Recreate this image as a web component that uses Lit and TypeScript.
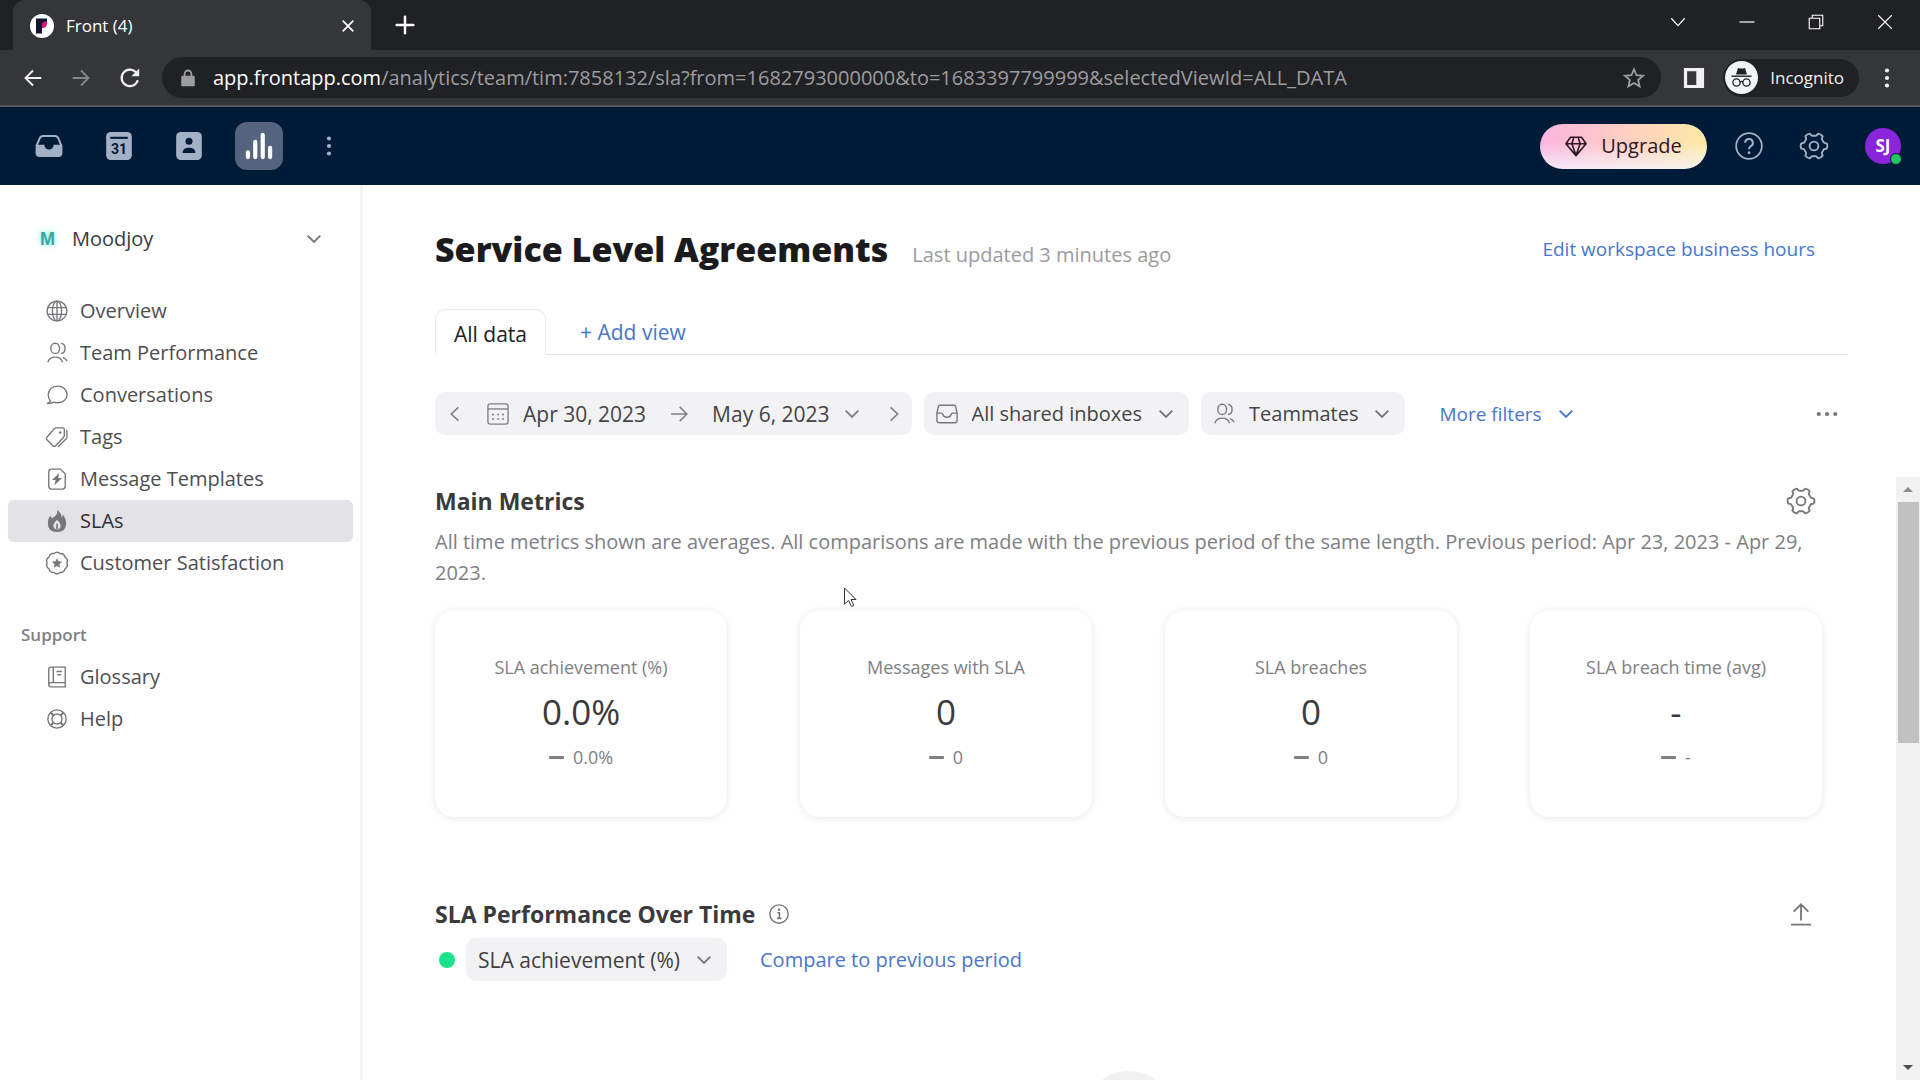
import { LitElement, html, css, svg } from "lit";
import { customElement, property } from "lit/decorators.js";

const polar = (angle: number, radius: number) =>
  `${(12 + radius * Math.cos(angle)).toFixed(2)} ${(12 + radius * Math.sin(angle)).toFixed(2)}`;

// Six rounded teeth laid out around the hub.
const gearPath = (() => {
  let d = "";
  for (let i = 0; i < 6; i++) {
    const a = (i * Math.PI) / 3;
    d += `${i === 0 ? "M" : "L"}${polar(a - 0.2, 11.2)}`;
    d += `Q${polar(a, 12)} ${polar(a + 0.2, 11.2)}`;
    d += `L${polar(a + 0.27, 9.6)}`;
    d += `Q${polar(a + 0.33, 8.5)} ${polar(a + 0.52, 8.8)}`;
    d += `Q${polar(a + 0.72, 8.5)} ${polar(a + 0.78, 9.6)}`;
  }
  return d + "Z";
})();

const scallopPath = (() => {
  const n = 10;
  let d = `M${polar(0, 10.8)}`;
  for (let i = 1; i <= n; i++) {
    const a = (i * 2 * Math.PI) / n;
    d += `Q${polar(a - Math.PI / n, 13.2)} ${polar(a, 10.8)}`;
  }
  return d + "Z";
})();

const glyphs: Record<string, unknown> = {
  back: svg`<path d="M22 12H3M12 3l-9 9 9 9" stroke-width="2.200"/>`,
  forward: svg`<path d="M2 12h19M12 3l9 9-9 9" stroke-width="2.200"/>`,
  reload: svg`<path d="M20.500 14.500A9 9 0 1 1 18.500 5.800" stroke-width="2.400"/><path d="M22 1.500v8.500h-8.500z" fill="currentColor" stroke="none"/>`,
  lock: svg`<path d="M4 10h16v12H4z" fill="currentColor" stroke-width="2" stroke-linejoin="round"/><path d="M7.500 10V6.500a4.500 4.500 0 0 1 9 0V10" stroke-width="2.400"/>`,
  star: svg`<path d="M12 2.500l2.800 6.500 7 .6-5.300 4.600 1.600 6.900-6.100-3.700-6.100 3.700 1.600-6.900L2.200 9.600l7-.6z" stroke-width="2"/>`,
  panel: svg`<path fill="currentColor" stroke="none" fill-rule="evenodd" d="M1 1h22v22H1zM4.500 4.500v15h10v-15z"/>`,
  close: svg`<path d="M4 4l16 16M20 4L4 20" stroke-width="2.600"/>`,
  plus: svg`<path d="M12 2v20M2 12h20" stroke-width="3" stroke-linecap="round"/>`,
  winClose: svg`<path d="M3 3l18 18M21 3L3 21" stroke-width="1.500"/>`,
  winMin: svg`<path d="M2 12h20" stroke-width="1.600"/>`,
  winMax: svg`<path d="M3 7h14v14H3zM7 7V3h14v14h-4" stroke-width="1.500"/>`,
  chevThin: svg`<path d="M3 7l9 10 9-10" stroke-width="1.500"/>`,
  chevron: svg`<path d="M2.500 7l9.500 9.500L21.500 7" stroke-width="2.800"/>`,
  left: svg`<path d="M17 2L6.500 12 17 22" stroke-width="2.400"/>`,
  right: svg`<path d="M7 2l10.500 10L7 22" stroke-width="2.400"/>`,
  arrow: svg`<path d="M1.500 12h21M13 2.500l9.500 9.500-9.500 9.500" stroke-width="2"/>`,
  vdots: svg`<g fill="currentColor" stroke="none"><circle cx="12" cy="3" r="2.500"/><circle cx="12" cy="12" r="2.500"/><circle cx="12" cy="21" r="2.500"/></g>`,
  hdots: svg`<g fill="currentColor" stroke="none"><circle cx="3" cy="12" r="2.300"/><circle cx="12" cy="12" r="2.300"/><circle cx="21" cy="12" r="2.300"/></g>`,
  inboxFill: svg`<path d="M1.500 11.500L4 5.500Q4.800 3.500 7 3.500h10q2.200 0 3 2l2.500 6" stroke-width="1.700"/><path fill="currentColor" stroke="none" d="M.5 11H8a4 4 0 0 0 8 0h7.500v7q0 3.500-3.500 3.500H4Q.5 21.500.5 18z"/>`,
  calFill: svg`<rect x="1" y="0" width="22" height="24" rx="4" fill="currentColor" stroke="none"/><path d="M4.500 5h15" stroke="#001b38" stroke-width="1.800"/><text x="12" y="19" text-anchor="middle" font-size="12" font-weight="700" fill="#001b38" stroke="none">31</text>`,
  contactFill: svg`<rect x="1" y="0" width="22" height="24" rx="4" fill="currentColor" stroke="none"/><circle cx="12" cy="8" r="3" fill="#001b38" stroke="none"/><path d="M6.500 18q0-4.500 5.500-4.500t5.500 4.500z" fill="#001b38" stroke="none"/>`,
  bars: svg`<path d="M2.500 17.500v4M8.800 8.500v13M15.200 2.500v19M21.500 13.500v8" stroke-width="3.600" stroke-linecap="round"/>`,
  gem: svg`<path d="M6 2.500h12l5 7L12 22.500 1 9.500zM1 9.500h22M9.500 3L7.500 9.500 12 22l4.500-12.500L14.500 3" stroke-width="1.700" stroke-linejoin="round"/>`,
  question: svg`<circle cx="12" cy="12" r="11" stroke-width="1.500"/><path d="M8.700 9.300a3.300 3.300 0 1 1 4.900 2.900q-1.600.9-1.600 2.600" stroke-width="1.700"/><circle cx="12" cy="17.800" r="1.200" fill="currentColor" stroke="none"/>`,
  gear: svg`<path d="${gearPath}" stroke-width="1.600" stroke-linejoin="round"/><circle cx="12" cy="12" r="3.800" stroke-width="1.600"/>`,
  globe: svg`<circle cx="12" cy="12" r="10.800"/><ellipse cx="12" cy="12" rx="5" ry="10.800"/><path d="M12 1.200v21.600M2 8.300h20M2 15.700h20"/>`,
  people: svg`<ellipse cx="10" cy="7" rx="4.800" ry="5.600"/><path d="M2 22q2-5.500 8-5.500t8 5.500M16.500 1.500q4.300.5 4.300 5.500t-4.300 5.500M18.500 17q3.200 1 4.500 4"/>`,
  bubble: svg`<path d="M5 18.500A9 9 0 0 1 2.500 11.500C2.500 6 7 2.300 12.700 2.300S23 6 23 11.500s-4.500 9-10.300 9q-2.400 0-4-.8-3 1.600-7.200 1.500Q4 20.500 5 18.500z" stroke-linejoin="round"/>`,
  tags: svg`<path d="M11 2h7.500q1.500 0 1.500 1.500V10q0 1.500-1 2.500l-8.500 9q-1.500 1.500-3 0L1 15q-1.300-1.500.2-3L9 3Q10 2 11 2zM22.800 4v8q0 1-1 2.200L13 23" stroke-linejoin="round"/><circle cx="15.500" cy="7" r="1.400" fill="currentColor" stroke="none"/>`,
  template: svg`<path d="M6 1.200h9.500l5.500 5V20q0 3-3 3H6q-3 0-3-3V4.200q0-3 3-3z"/><path d="M14.500 5.500L6.500 13h4l-1.500 6L17.500 11h-4.200z" fill="currentColor" stroke="none"/>`,
  flame: svg`<path fill="currentColor" stroke="none" fill-rule="evenodd" d="M12.500 0Q17 3.500 17 8q1.300-1 1.500-3Q22 9.500 22 14.500 22 24 12 24T2 14.500Q2 9 4.800 6q.4 2 1.700 3Q12.800 6 12.500 0zM12 11q-4 3.500-4 6.500t4 3.800q4-.8 4-3.800T12 11z"/><path d="M12 15v6" stroke-width="1.800"/>`,
  badge: svg`<path d="${scallopPath}" stroke-linejoin="round"/><path fill="currentColor" stroke="none" d="M12 6.500l1.600 3.700 4 .4-3 2.700.9 4-3.500-2.100-3.500 2.100.9-4-3-2.700 4-.4z"/>`,
  book: svg`<path d="M5.500 1.200H21v21.600H5.500Q3 22.800 3 20.500v-17q0-2.300 2.500-2.300zM3 20.500q0-2.300 2.500-2.300H21M8 1.200v17M11.500 6h6M12.500 9.500h4"/>`,
  ring: svg`<circle cx="12" cy="12" r="10"/><circle cx="12" cy="12" r="5.500"/><path d="M5 5l3 3M19 5l-3 3M5 19l3-3M19 19l-3-3" stroke-width="2.400"/>`,
  calendar: svg`<rect x="1" y="1" width="22" height="22" rx="2.500"/><path d="M1 6.500h22"/><g fill="currentColor" stroke="none"><circle cx="12" cy="12.500" r="1.100"/><circle cx="17.500" cy="12.500" r="1.100"/><circle cx="6.500" cy="17.500" r="1.100"/><circle cx="12" cy="17.500" r="1.100"/><circle cx="17.500" cy="17.500" r="1.100"/><circle cx="6.500" cy="12.500" r="1.100"/></g>`,
  inbox: svg`<path d="M4.500 2.500h15q1.500 0 2 1.800L23 11v8q0 2.500-2.500 2.500h-17Q1 21.500 1 19v-8l1.500-6.700q.5-1.800 2-1.800zM1 11h4.500q1.500 0 2 1.500 1 3 4.500 3t4.500-3q.5-1.500 2-1.500H23" stroke-linejoin="round"/>`,
  info: svg`<circle cx="12" cy="12" r="11" stroke-width="1.700"/><path d="M10 10.500h2.500V17M9.500 17.200h5.500" stroke-width="1.900"/><circle cx="12" cy="6.800" r="1.500" fill="currentColor" stroke="none"/>`,
  upload: svg`<path d="M12 19V1.500M4 9.500l8-8 8 8M1 23.500h22" stroke-width="2"/>`,
};

@customElement("ui-icon")
export class UiIcon extends LitElement {
  @property() name = "";
  static styles = css`
    :host {
      display: inline-flex;
      flex: none;
      width: 22px;
      height: 22px;
    }
    .glyph {
      width: 100%;
      height: 100%;
      overflow: visible;
      fill: none;
      stroke: currentColor;
      stroke-width: 1.5;
      font-family: Roboto, sans-serif;
    }
  `;
  render() {
    return html`<svg class="glyph" viewBox="0 0 24 24" aria-hidden="true">${glyphs[this.name]}</svg>`;
  }
}

const reports = [
  { icon: "globe", label: "Overview" },
  { icon: "people", label: "Team Performance" },
  { icon: "bubble", label: "Conversations" },
  { icon: "tags", label: "Tags" },
  { icon: "template", label: "Message Templates" },
  { icon: "flame", label: "SLAs", current: true },
  { icon: "badge", label: "Customer Satisfaction" },
];

const support = [
  { icon: "book", label: "Glossary" },
  { icon: "ring", label: "Help" },
];

const metrics = [
  { label: "SLA achievement (%)", value: "0.0%", delta: "0.0%" },
  { label: "Messages with SLA", value: "0", delta: "0" },
  { label: "SLA breaches", value: "0", delta: "0" },
  { label: "SLA breach time (avg)", value: "-", delta: "-" },
];

@customElement("app-root")
export class AppRoot extends LitElement {
  static styles = css`
    :host {
      display: flex;
      flex-direction: column;
      height: 100vh;
      overflow: hidden;
      background: #fefefe;
      color: #3f3f42;
      font-family: "Segoe UI", "Open Sans", "Noto Sans", sans-serif;
      font-size: 20px;
      line-height: 24px;
    }
    * {
      box-sizing: border-box;
    }
    button,
    select {
      appearance: none;
      margin: 0;
      padding: 0;
      border: 0;
      background: none;
      color: inherit;
      font: inherit;
      white-space: nowrap;
    }
    a {
      color: inherit;
      text-decoration: none;
      white-space: nowrap;
    }
    button,
    a {
      display: inline-flex;
      align-items: center;
    }
    h1,
    h2,
    p {
      margin: 0;
    }
    .s16 { width: 16px; height: 16px; }
    .s18 { width: 18px; height: 18px; }
    .s20 { width: 20px; height: 20px; }
    .s28 { width: 28px; height: 28px; }

    /* browser frame */
    .strip {
      display: flex;
      flex: none;
      align-items: center;
      height: 50px;
      padding: 0 9px 0 13px;
      background: #202124;
      color: #fff;
    }
    .browser-tab {
      display: flex;
      align-items: center;
      align-self: stretch;
      gap: 12px;
      width: 358px;
      padding: 2px 15px 0 17px;
      border-radius: 12px 12px 0 0;
      background: #35363a;
      font-size: 17px;
    }
    .favicon {
      width: 24px;
      height: 24px;
    }
    .grow {
      flex: 1;
      text-align: left;
    }
    .new-tab {
      margin-left: 24px;
    }
    .window-buttons {
      display: flex;
      gap: 51px;
      margin-left: auto;
      padding: 0 17px 6px 0;
    }
    .toolbar {
      display: flex;
      flex: none;
      align-items: center;
      height: 57px;
      padding: 0 23px;
      border-bottom: 2px solid #5a5b5f;
      background: #35363a;
      color: #f1f1f2;
    }
    .history {
      display: flex;
      gap: 28px;
    }
    .dim {
      color: #86878b;
    }
    .omnibox {
      display: flex;
      flex: 1;
      align-items: center;
      gap: 16px;
      height: 41px;
      margin: 0 22px 0 21px;
      padding: 0 16px 0 17px;
      border-radius: 21px;
      background: #202124;
      color: #9c9da1;
    }
    .url {
      flex: 1;
    }
    .domain {
      color: #fff;
    }
    .incognito {
      display: flex;
      align-items: center;
      gap: 12px;
      height: 38px;
      margin: 0 18px;
      padding: 0 15px 0 2px;
      border-radius: 19px;
      background: #202124;
      font-size: 17px;
    }
    .spy {
      width: 33px;
      height: 33px;
    }

    /* app bar */
    .appbar {
      display: flex;
      flex: none;
      align-items: center;
      height: 78px;
      padding: 0 19px 0 25px;
      background: #001b38;
      color: #a3b1c6;
    }
    .apps {
      display: flex;
      align-items: center;
      gap: 22px;
    }
    .app {
      justify-content: center;
      width: 48px;
      height: 48px;
      border-radius: 12px;
    }
    .app.on {
      background: #54637e;
      color: #fff;
    }
    .account {
      display: flex;
      align-items: center;
      gap: 37px;
      margin-left: auto;
    }
    .upgrade {
      justify-content: center;
      gap: 14px;
      width: 167px;
      height: 45px;
      margin-right: -9px;
      border-radius: 23px;
      background: linear-gradient(to bottom, rgba(245, 245, 255, 0) 40%, rgba(245, 245, 255, 0.8)),
        linear-gradient(to right, #fbb4e0, #ffd3bd 60%, #fdeaa4);
      color: #2e1521;
      font-weight: 500;
    }
    .avatar {
      position: relative;
      justify-content: center;
      width: 36px;
      height: 36px;
      border-radius: 50%;
      background: #8a25db;
      color: #fff;
      font-size: 17px;
      font-weight: 700;
    }
    .presence {
      position: absolute;
      right: -1px;
      bottom: -1px;
      width: 12px;
      height: 12px;
      border: 1px solid #001b38;
      border-radius: 50%;
      background: #22c55e;
    }

    /* body */
    .body {
      display: flex;
      flex: 1;
      min-height: 0;
    }
    .sidebar {
      flex: none;
      width: 363px;
      padding: 33px 7px 0 8px;
      border-right: 3px solid #f4f4f6;
    }
    .workspace {
      width: 100%;
      height: 42px;
      padding: 0 31px 0 32px;
      gap: 17px;
      color: #3a3a3c;
    }
    .mark {
      color: #3aa6a0;
      font: 700 18px/24px "Liberation Sans", sans-serif;
      text-shadow: 0 0 5px #8ff3ee, 0 0 9px #b9faf6;
    }
    .links {
      display: flex;
      flex-direction: column;
      margin: 30px 0 0;
      padding: 0;
      list-style: none;
    }
    .link {
      display: flex;
      gap: 12px;
      height: 42px;
      padding-left: 38px;
      border-radius: 6px;
      color: #4e4e51;
    }
    .link ui-icon {
      color: #77777b;
    }
    .link.on {
      background: #e2e2e7;
      color: #2f2f33;
    }
    .group {
      margin: 39px 13px 0;
      color: #808084;
      font-size: 17px;
      font-weight: 600;
    }
    .group + .links {
      margin-top: 9px;
    }
    .chev {
      color: #77777b;
    }

    .main {
      display: flex;
      flex: 1;
      flex-direction: column;
      min-width: 0;
      padding-left: 72px;
    }
    .title-row {
      display: flex;
      align-items: baseline;
      gap: 24px;
      padding: 40px 105px 0 0;
    }
    .title {
      color: #1b1b1d;
      font-size: 34px;
      font-weight: 800;
      line-height: 48px;
    }
    .updated {
      color: #9b9b9e;
    }
    .blue {
      color: #4a76c9;
      font-weight: 500;
    }
    .small {
      font-size: 19px;
    }
    .title-row .blue {
      margin-left: auto;
      align-self: center;
    }
    .views {
      display: flex;
      margin: 36px 72px 0 0;
      border-bottom: 1px solid #e4e4e6;
      font-size: 21px;
    }
    .view {
      height: 46px;
      margin-bottom: -1px;
      padding: 4px 18px 0;
      border: 1px solid #e9e9eb;
      border-bottom: 1px solid #fefefe;
      border-radius: 10px 10px 0 0;
      color: #222224;
      font-weight: 500;
    }
    .add-view {
      margin-left: 34px;
    }
    .filters {
      display: flex;
      gap: 12px;
      margin: 37px 82px 0 0;
      color: #444447;
      font-weight: 500;
    }
    .range,
    .pick {
      display: flex;
      align-items: center;
      height: 43px;
      border-radius: 10px;
      background: #f2f2f4;
    }
    .range {
      gap: 12px;
      padding: 0 10px 0 12px;
      font-size: 21px;
    }
    .range .dates {
      gap: 14px;
      padding: 0 14px 0 12px;
    }
    .range .dates ui-icon,
    .step {
      color: #808084;
    }
    .range .dates .to {
      margin: 0 10px;
    }
    .pick {
      gap: 14px;
      padding: 0 15px 0 12px;
    }
    .pick ui-icon {
      color: #77777b;
    }
    .pick select {
      margin-right: 2px;
      field-sizing: content;
    }
    .more-filters {
      gap: 16px;
      margin-left: 22px;
    }
    .overflow {
      margin-left: auto;
      color: #77777b;
    }
    .scroller {
      display: flex;
      flex: 1;
      min-height: 0;
      margin: 42px 0 0 -12px;
    }
    .report {
      flex: 1;
      min-width: 0;
      padding: 8px 74px 0 12px;
      overflow: hidden;
    }
    .heading {
      display: flex;
      align-items: center;
      gap: 14px;
      height: 32px;
      padding-right: 7px;
      color: #3a3a3c;
    }
    .heading h2 {
      font-size: 23px;
      font-weight: 700;
    }
    .heading button {
      color: #77777b;
    }
    .heading .tool {
      justify-content: center;
      width: 28px;
      margin-left: auto;
    }
    .note {
      padding-top: 9px;
      color: #808084;
      line-height: 31px;
    }
    .cards {
      display: grid;
      grid-template-columns: repeat(4, 1fr);
      gap: 73px;
      margin-top: 22px;
    }
    .card {
      display: flex;
      flex-direction: column;
      align-items: center;
      height: 207px;
      padding-top: 45px;
      border-radius: 20px;
      box-shadow: 0 1px 6px 1px #eeeef1;
      color: #808084;
      font-size: 18px;
      font-weight: 500;
    }
    .value {
      margin: 12px 0;
      color: #3a3a3c;
      font-size: 35px;
      line-height: 42px;
    }
    .delta {
      display: flex;
      align-items: center;
      gap: 9px;
    }
    .same {
      width: 15px;
      height: 3px;
      border-radius: 1px;
      background: #808084;
    }
    .chart-heading {
      margin-top: 81px;
    }
    .series {
      display: flex;
      align-items: center;
      gap: 11px;
      margin-top: 8px;
      padding-left: 4px;
      font-weight: 500;
    }
    .series .pick {
      font-size: 21px;
    }
    .dot {
      width: 16px;
      height: 16px;
      border-radius: 50%;
      background: #19e387;
    }
    .series .blue {
      margin-left: 22px;
    }
    .placeholder {
      display: flex;
      justify-content: center;
      padding-top: 90px;
    }
    .bubble {
      flex: none;
      width: 92px;
      height: 92px;
      border-radius: 50%;
      background: #f1f1f2;
    }
    .scrollbar {
      display: flex;
      flex: none;
      flex-direction: column;
      align-items: center;
      width: 24px;
      background: #f1f1f2;
    }
    .scroll-btn {
      justify-content: center;
      width: 24px;
      height: 25px;
    }
    .thumb {
      width: 21px;
      height: 40%;
      background: #c1c1c1;
    }
    .tri {
      width: 0;
      height: 0;
      border: 5px solid transparent;
    }
    .tri.up {
      border-top: 0;
      border-bottom-color: #8c8c8c;
    }
    .tri.down {
      border-bottom: 0;
      border-top-color: #4e4e50;
    }
    .cursor {
      position: absolute;
      left: 843px;
      top: 587px;
      width: 14px;
      height: 21px;
    }
  `;

  private link(item: { icon: string; label: string; current?: boolean }) {
    return html`<li>
      <a class="link ${item.current ? "on" : ""}" href="#${item.icon}">
        <ui-icon name=${item.icon}></ui-icon>${item.label}
      </a>
    </li>`;
  }

  private picker(icon: string, label: string, name: string) {
    return html`<label class="pick">
      ${icon ? html`<ui-icon name=${icon}></ui-icon>` : ""}
      <select aria-label=${name}>
        <option>${label}</option>
      </select>
      <ui-icon class="s16" name="chevron"></ui-icon>
    </label>`;
  }

  render() {
    return html`
      <header class="strip">
        <div class="browser-tab">
          <svg class="favicon" viewBox="0 0 24 24" aria-hidden="true">
            <circle cx="12" cy="12" r="12" fill="#fff" />
            <path d="M6 4.500h11v5.500h-5v9.500H6z" fill="#14142e" />
            <path d="M17 7.500v2.500a4.500 4.500 0 0 1-4.500 4H12v-3a3.500 3.500 0 0 1 3.500-3.500z" fill="#e0127a" />
          </svg>
          <span class="grow">Front (4)</span>
          <button aria-label="Close tab"><ui-icon class="s16" name="close"></ui-icon></button>
        </div>
        <button class="new-tab" aria-label="New tab"><ui-icon class="s20" name="plus"></ui-icon></button>
        <div class="window-buttons">
          <button aria-label="Search tabs"><ui-icon class="s18" name="chevThin"></ui-icon></button>
          <button aria-label="Minimize"><ui-icon class="s18" name="winMin"></ui-icon></button>
          <button aria-label="Restore"><ui-icon class="s18" name="winMax"></ui-icon></button>
          <button aria-label="Close window"><ui-icon class="s18" name="winClose"></ui-icon></button>
        </div>
      </header>

      <div class="toolbar">
        <div class="history">
          <button aria-label="Back"><ui-icon class="s20" name="back"></ui-icon></button>
          <button class="dim" aria-label="Forward"><ui-icon class="s20" name="forward"></ui-icon></button>
          <button aria-label="Reload"><ui-icon name="reload"></ui-icon></button>
        </div>
        <div class="omnibox">
          <ui-icon class="s18" name="lock"></ui-icon>
          <div class="url" role="textbox" tabindex="0" aria-label="Address">
            <span class="domain">app.frontapp.com</span>/analytics/team/tim:7858132/sla?from=1682793000000&amp;to=1683397799999&amp;selectedViewId=ALL_DATA
          </div>
          <button aria-label="Bookmark"><ui-icon name="star"></ui-icon></button>
        </div>
        <button aria-label="Side panel"><ui-icon name="panel"></ui-icon></button>
        <button class="incognito">
          <svg class="spy" viewBox="0 0 33 33" aria-hidden="true">
            <circle cx="16.500" cy="16.500" r="16.500" fill="#f1f3f4" />
            <path d="M13 7q3.500 1 7 0l2 6.500H11z" fill="#202124" />
            <path d="M6.500 15.200h20" stroke="#202124" stroke-width="1.400" />
            <g fill="none" stroke="#202124" stroke-width="1.300">
              <circle cx="11.500" cy="21.500" r="3.600" />
              <circle cx="21.500" cy="21.500" r="3.600" />
              <path d="M15 21q1.500-1 3 0" />
            </g>
          </svg>
          Incognito
        </button>
        <button aria-label="Browser menu"><ui-icon class="s20" name="vdots"></ui-icon></button>
      </div>

      <nav class="appbar" aria-label="Apps">
        <div class="apps">
          <button class="app" aria-label="Inbox"><ui-icon class="s28" name="inboxFill"></ui-icon></button>
          <button class="app" aria-label="Calendar"><ui-icon class="s28" name="calFill"></ui-icon></button>
          <button class="app" aria-label="Contacts"><ui-icon class="s28" name="contactFill"></ui-icon></button>
          <button class="app on" aria-label="Analytics"><ui-icon class="s28" name="bars"></ui-icon></button>
          <button class="app" aria-label="More apps"><ui-icon class="s20" name="vdots"></ui-icon></button>
        </div>
        <div class="account">
          <button class="upgrade"><ui-icon name="gem"></ui-icon>Upgrade</button>
          <button aria-label="Help center"><ui-icon class="s28" name="question"></ui-icon></button>
          <button aria-label="Settings"><ui-icon class="s28" name="gear"></ui-icon></button>
          <button class="avatar">SJ<span class="presence"></span></button>
        </div>
      </nav>

      <div class="body">
        <aside class="sidebar">
          <button class="workspace">
            <span class="mark">M</span>
            <span class="grow">Moodjoy</span>
            <ui-icon class="s16 chev" name="chevron"></ui-icon>
          </button>
          <ul class="links">${reports.map((r) => this.link(r))}</ul>
          <p class="group">Support</p>
          <ul class="links">${support.map((r) => this.link(r))}</ul>
        </aside>

        <main class="main">
          <div class="title-row">
            <h1 class="title">Service Level Agreements</h1>
            <span class="updated">Last updated 3 minutes ago</span>
            <a class="blue small" href="#hours">Edit workspace business hours</a>
          </div>
          <div class="views">
            <button class="view">All data</button>
            <button class="add-view blue">+ Add view</button>
          </div>
          <div class="filters">
            <div class="range">
              <button class="step" aria-label="Previous period"><ui-icon class="s16" name="left"></ui-icon></button>
              <button class="dates">
                <ui-icon name="calendar"></ui-icon>Apr 30, 2023
                <ui-icon class="s18 to" name="arrow"></ui-icon>May 6, 2023
                <ui-icon class="s16" name="chevron"></ui-icon>
              </button>
              <button class="step" aria-label="Next period"><ui-icon class="s16" name="right"></ui-icon></button>
            </div>
            ${this.picker("inbox", "All shared inboxes", "Inboxes")}
            ${this.picker("people", "Teammates", "Teammates")}
            <button class="more-filters blue small">More filters<ui-icon class="s16" name="chevron"></ui-icon></button>
            <button class="overflow" aria-label="More options"><ui-icon name="hdots"></ui-icon></button>
          </div>

          <div class="scroller">
            <div class="report">
              <div class="heading">
                <h2>Main Metrics</h2>
                <button class="tool" aria-label="Metric settings"><ui-icon class="s28" name="gear"></ui-icon></button>
              </div>
              <p class="note">
                All time metrics shown are averages. All comparisons are made with the previous period of the same
                length. Previous period: Apr 23, 2023 - Apr 29, 2023.
              </p>
              <div class="cards">
                ${metrics.map(
                  (m) => html`<section class="card">
                    <span>${m.label}</span>
                    <span class="value">${m.value}</span>
                    <span class="delta"><span class="same"></span>${m.delta}</span>
                  </section>`
                )}
              </div>
              <div class="heading chart-heading">
                <h2>SLA Performance Over Time</h2>
                <button aria-label="About this chart"><ui-icon class="s20" name="info"></ui-icon></button>
                <button class="tool" aria-label="Export"><ui-icon name="upload"></ui-icon></button>
              </div>
              <div class="series">
                <span class="dot"></span>
                ${this.picker("", "SLA achievement (%)", "Metric")}
                <a class="blue" href="#compare">Compare to previous period</a>
              </div>
              <div class="placeholder"><span class="bubble"></span></div>
            </div>
            <div class="scrollbar">
              <button class="scroll-btn" aria-label="Scroll up"><span class="tri up"></span></button>
              <div class="thumb"></div>
              <span class="grow"></span>
              <button class="scroll-btn" aria-label="Scroll down"><span class="tri down"></span></button>
            </div>
          </div>
        </main>
      </div>
      <svg class="cursor" viewBox="0 0 14 21" aria-hidden="true">
        <path d="M1.500 1v16l4-3.500 3 6 2.300-1.200-2.800-5.800H13z" fill="#fff" stroke="#333" stroke-width="1" />
      </svg>
    `;
  }
}
